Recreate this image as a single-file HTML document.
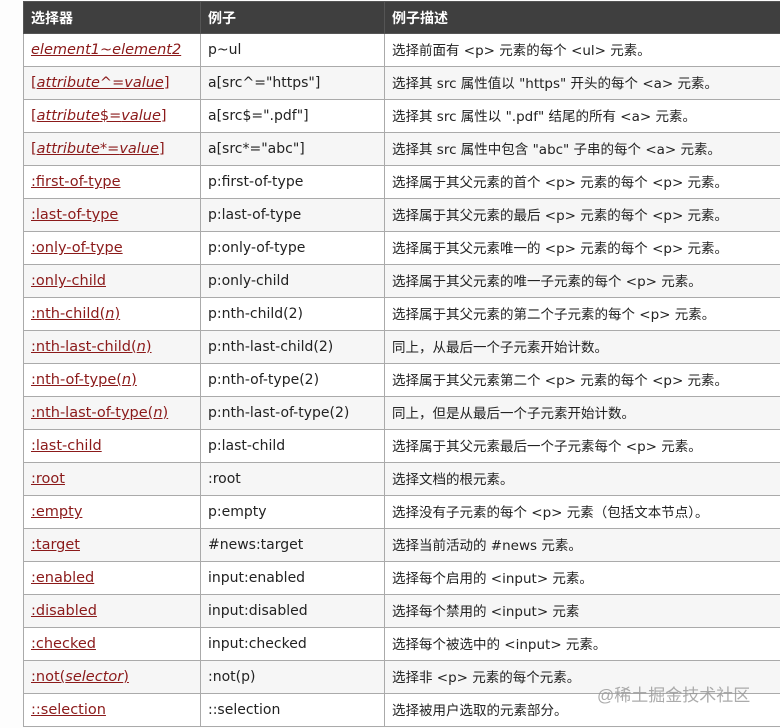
<!DOCTYPE html>
<html><head><meta charset="utf-8"><style>
html,body{margin:0;padding:0;background:#fdfdfd;width:780px;height:728px;overflow:hidden;position:relative}
table{position:absolute;left:23px;top:1px;border-collapse:collapse;width:757px;table-layout:fixed;font-family:"DejaVu Sans","Noto Sans CJK SC",sans-serif;font-size:14px;color:#222}
th{background:#3f3f3f;color:#fff;text-align:left;height:31px;padding:0 7px;font-size:14px;line-height:18px;font-family:"Liberation Sans","Noto Sans CJK SC",sans-serif;font-weight:bold;border:1px solid #555}
td{height:32px;padding:0 7px;border:1px solid #aaa;white-space:nowrap;overflow:hidden;background:#fff;line-height:18px;vertical-align:middle}
tr:nth-child(odd) td{background:#f6f6f6}
td:nth-child(3){font-family:"DejaVu Sans","Noto Sans CJK SC",sans-serif;font-size:13.5px;height:30px;padding-top:2px}
td a{color:#8b1a1a;text-decoration:underline;font-size:14.5px}
td a i{font-style:italic}
.wm{position:absolute;left:597px;top:686px;font-family:"Liberation Sans","Noto Sans CJK SC",sans-serif;font-size:17px;line-height:20px;color:rgba(150,150,150,0.8)}
</style></head><body>
<table>
<colgroup><col style="width:177px"><col style="width:184px"><col style="width:396px"></colgroup>
<tr><th>选择器</th><th>例子</th><th>例子描述</th></tr>
<tr><td><a><i>element1~element2</i></a></td><td>p~ul</td><td>选择前面有 &lt;p&gt; 元素的每个 &lt;ul&gt; 元素。</td></tr>
<tr><td><a>[<i>attribute</i>^=<i>value</i>]</a></td><td>a[src^="https"]</td><td>选择其 src 属性值以 "https" 开头的每个 &lt;a&gt; 元素。</td></tr>
<tr><td><a>[<i>attribute</i>$=<i>value</i>]</a></td><td>a[src$=".pdf"]</td><td>选择其 src 属性以 ".pdf" 结尾的所有 &lt;a&gt; 元素。</td></tr>
<tr><td><a>[<i>attribute</i>*=<i>value</i>]</a></td><td>a[src*="abc"]</td><td>选择其 src 属性中包含 "abc" 子串的每个 &lt;a&gt; 元素。</td></tr>
<tr><td><a>:first-of-type</a></td><td>p:first-of-type</td><td>选择属于其父元素的首个 &lt;p&gt; 元素的每个 &lt;p&gt; 元素。</td></tr>
<tr><td><a>:last-of-type</a></td><td>p:last-of-type</td><td>选择属于其父元素的最后 &lt;p&gt; 元素的每个 &lt;p&gt; 元素。</td></tr>
<tr><td><a>:only-of-type</a></td><td>p:only-of-type</td><td>选择属于其父元素唯一的 &lt;p&gt; 元素的每个 &lt;p&gt; 元素。</td></tr>
<tr><td><a>:only-child</a></td><td>p:only-child</td><td>选择属于其父元素的唯一子元素的每个 &lt;p&gt; 元素。</td></tr>
<tr><td><a>:nth-child(<i>n</i>)</a></td><td>p:nth-child(2)</td><td>选择属于其父元素的第二个子元素的每个 &lt;p&gt; 元素。</td></tr>
<tr><td><a>:nth-last-child(<i>n</i>)</a></td><td>p:nth-last-child(2)</td><td>同上，从最后一个子元素开始计数。</td></tr>
<tr><td><a>:nth-of-type(<i>n</i>)</a></td><td>p:nth-of-type(2)</td><td>选择属于其父元素第二个 &lt;p&gt; 元素的每个 &lt;p&gt; 元素。</td></tr>
<tr><td><a>:nth-last-of-type(<i>n</i>)</a></td><td>p:nth-last-of-type(2)</td><td>同上，但是从最后一个子元素开始计数。</td></tr>
<tr><td><a>:last-child</a></td><td>p:last-child</td><td>选择属于其父元素最后一个子元素每个 &lt;p&gt; 元素。</td></tr>
<tr><td><a>:root</a></td><td>:root</td><td>选择文档的根元素。</td></tr>
<tr><td><a>:empty</a></td><td>p:empty</td><td>选择没有子元素的每个 &lt;p&gt; 元素（包括文本节点）。</td></tr>
<tr><td><a>:target</a></td><td>#news:target</td><td>选择当前活动的 #news 元素。</td></tr>
<tr><td><a>:enabled</a></td><td>input:enabled</td><td>选择每个启用的 &lt;input&gt; 元素。</td></tr>
<tr><td><a>:disabled</a></td><td>input:disabled</td><td>选择每个禁用的 &lt;input&gt; 元素</td></tr>
<tr><td><a>:checked</a></td><td>input:checked</td><td>选择每个被选中的 &lt;input&gt; 元素。</td></tr>
<tr><td><a>:not(<i>selector</i>)</a></td><td>:not(p)</td><td>选择非 &lt;p&gt; 元素的每个元素。</td></tr>
<tr><td><a>::selection</a></td><td>::selection</td><td>选择被用户选取的元素部分。</td></tr>
</table>
<div class="wm">@稀土掘金技术社区</div>
</body></html>
